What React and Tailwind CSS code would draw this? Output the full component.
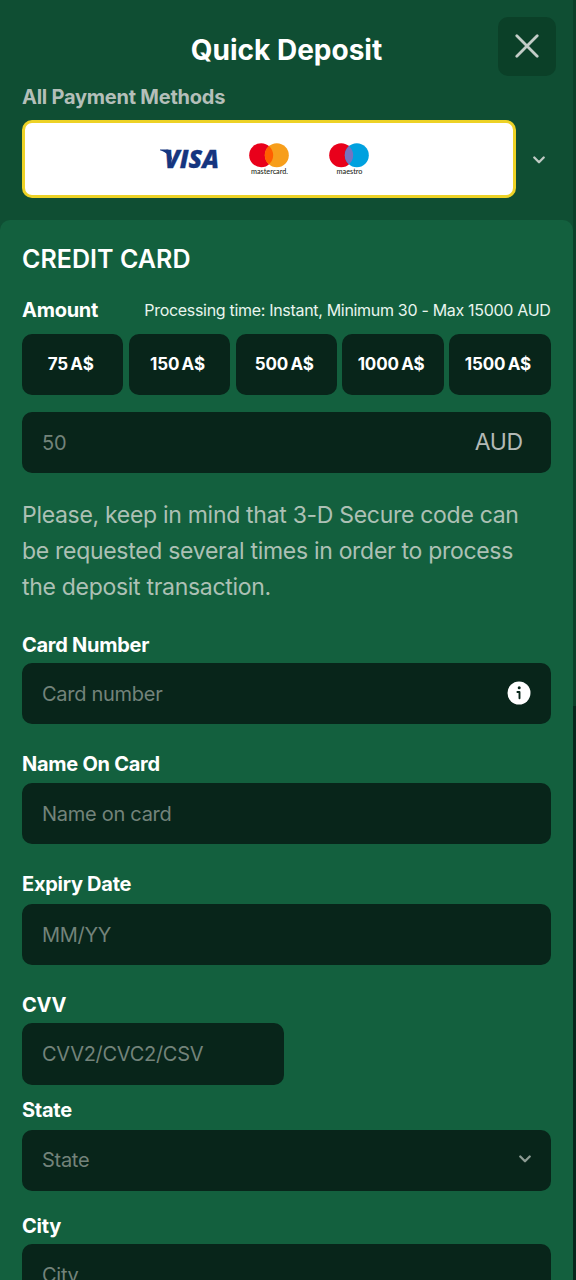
import React, { useState } from 'react';

const AMOUNTS = [75, 150, 500, 1000, 1500];

const Chevron = ({ className }) => (
    <svg viewBox="0 0 12 8" className={`w-3 h-2 ${className}`} fill="none" stroke="currentColor" strokeWidth="2.3" strokeLinecap="round" strokeLinejoin="round">
        <path d="M1.3 1.5 6 6.2 10.7 1.5" />
    </svg>
);

const InfoIcon = () => (
    <svg viewBox="0 0 24 24" className="w-6 h-6">
        <circle cx="12" cy="12" r="11.5" fill="#fff" />
        <circle cx="12.2" cy="6.8" r="1.5" fill="#08251a" />
        <path d="M10.4 11h2.1v6.3" fill="none" stroke="#08251a" strokeWidth="1.9" strokeLinecap="round" strokeLinejoin="round" />
    </svg>
);

const VisaLogo = () => (
    <svg viewBox="0 -10 62 40" className="w-[62px] h-10" fill="#15357f">
        <path d="M0 .6h7.500q2 0 2.500 2l3 11C10.500 7 6 3 0 1.300z" />
        <text x="4.500" y="18.600" textLength="54.500" lengthAdjust="spacingAndGlyphs" fontFamily="Open Sans, sans-serif" fontSize="25" fontStyle="italic" fontWeight="800" stroke="#15357f" strokeWidth="0.3">VISA</text>
    </svg>
);

const CirclesLogo = ({ name, right, overlap, textWidth }) => (
    <svg viewBox="0 0 40 33" className="w-10 h-[33px]">
        <circle cx="12.200" cy="12.200" r="12" fill="#e9001b" />
        <circle cx="27.800" cy="12.200" r="12" fill={right} />
        <path d="M20 3.100a12 12 0 0 1 0 18.200a12 12 0 0 1 0-18.200z" fill={overlap} />
        <text x="20.500" y="30.700" textAnchor="middle" textLength={textWidth} lengthAdjust="spacingAndGlyphs" fontFamily="Lato, sans-serif" fontSize="6.600" fontWeight="500" fill="#231f20">{name}</text>
    </svg>
);

const Label = ({ children }) => (
    <label className="block h-6 text-[20px] leading-6 font-bold tracking-[-0.27px] text-white">{children}</label>
);

const Field = ({ placeholder, className = 'h-[61px]', children }) => {
    const [value, setValue] = useState('');
    return (
        <div className={`flex items-center justify-between rounded-[10px] bg-[#08251a] pl-5 ${className}`}>
            <input
                type="text"
                placeholder={placeholder}
                className="min-w-0 flex-1 bg-transparent text-[20px] tracking-[-0.28px] text-white placeholder:text-[#73837a] outline-none"
                value={value}
                onChange={(e) => setValue(e.target.value)}
            />
            {children}
        </div>
    );
};

export default function App() {
    return (
        <div className="flex h-[1280px] w-[576px] overflow-hidden bg-[#0f4e33] font-['Inter',sans-serif]">
            <div className="flex w-[573px] shrink-0 flex-col">

                {/* Header */}
                <header className="h-[220px] shrink-0 pt-[17px] pl-[22px]">
                    <div className="grid h-[59px] grid-cols-[1fr_auto_1fr] items-center pr-[17px]">
                        <span></span>
                        <h1 className="pt-[7px] pr-[5px] text-[28px] leading-9 font-bold text-white">Quick Deposit</h1>
                        <button className="flex h-[59px] w-[58px] items-center justify-center justify-self-end rounded-[10px] bg-[#0b4028] pr-px pb-px text-[#c3cdc7]">
                            <svg viewBox="0 0 24 24" className="w-6 h-6" fill="none" stroke="currentColor" strokeWidth="2.8" strokeLinecap="round">
                                <path d="M1.800 1.800 22.200 22.200M22.200 1.800 1.800 22.200" />
                            </svg>
                        </button>
                    </div>
                    <h2 className="mt-[9px] h-6 text-[20px] leading-6 font-bold tracking-[-0.24px] text-[#b4bfb9]">All Payment Methods</h2>
                    <div className="mt-[11px] flex items-center">
                        <div className="flex h-[78px] w-[494px] items-center rounded-[10px] border-3 border-[#edd226] bg-white pl-[135px]">
                            <VisaLogo />
                            <div className="ml-[27px] flex gap-10">
                                <CirclesLogo name="mastercard." right="#f79e1b" overlap="#ff5f00" textWidth="37" />
                                <CirclesLogo name="maestro" right="#00a1df" overlap="#7673c0" textWidth="26" />
                            </div>
                        </div>
                        <Chevron className="mt-px ml-[16.500px] text-[#c0cbc5]" />
                    </div>
                </header>

                {/* Card form */}
                <main className="flex-1 rounded-t-[10px] bg-[#13603e] pt-[22px] pr-[22.500px] pl-[22px]">
                    <h2 className="h-8 pt-px text-[25px] leading-8 font-semibold tracking-[0.05px] text-white">CREDIT CARD</h2>
                    <div className="mt-6 flex items-center justify-between">
                        <Label>Amount</Label>
                        <span className="text-[16px] leading-6 tracking-[-0.31px] whitespace-nowrap text-[#e9f5ee]">Processing time: Instant, Minimum 30 - Max 15000 AUD</span>
                    </div>
                    <div className="mt-3 grid grid-cols-5 gap-[5.500px]">
                        {AMOUNTS.map((amount) => (
                            <button key={amount} className="h-[61px] rounded-[10px] bg-[#08251a] pt-px pr-1 text-[17px] font-bold tracking-[-0.15px] [word-spacing:-1.500px] text-white">
                                {amount} A$
                            </button>
                        ))}
                    </div>
                    <Field placeholder="50" className="mt-[17px] h-[61px] pr-7">
                        <span className="text-[23px] tracking-[-0.5px] text-[#b3b9b5]">AUD</span>
                    </Field>
                    <p className="mt-6 text-[23px] leading-9 tracking-[-0.3px] text-[#adc0b5]">
                        Please, keep in mind that 3-D Secure code can<br />
                        be requested several times in order to process<br />
                        the deposit transaction.
                    </p>

                    <div className="mt-7">
                        <Label>Card Number</Label>
                        <Field placeholder="Card number" className="mt-1.5 h-[61px] pr-[19.500px]">
                            <div className="pb-0.5"><InfoIcon /></div>
                        </Field>
                    </div>
                    <div className="mt-7">
                        <Label>Name On Card</Label>
                        <Field placeholder="Name on card" className="mt-[7px] h-[61px]" />
                    </div>
                    <div className="mt-7">
                        <Label>Expiry Date</Label>
                        <Field placeholder="MM/YY" className="mt-2 h-[61px]" />
                    </div>
                    <div className="mt-7">
                        <Label>CVV</Label>
                        <Field placeholder="CVV2/CVC2/CSV" className="mt-1.5 h-[61.500px] w-[262px]" />
                    </div>
                    <div className="mt-[13.500px]">
                        <Label>State</Label>
                        <Field placeholder="State" className="mt-[7.500px] h-[61.500px] pr-5">
                            <Chevron className="mb-0.5 text-[#8d9c94]" />
                        </Field>
                    </div>
                    <div className="mt-[23px]">
                        <Label>City</Label>
                        <Field placeholder="City" className="mt-1.5 h-[61.500px]" />
                    </div>
                </main>
            </div>

            {/* Scrollbar */}
            <div className="w-[3px] bg-[#07271b]">
                <div className="h-[706px] bg-[#0b4029]"></div>
            </div>
        </div>
    );
}
